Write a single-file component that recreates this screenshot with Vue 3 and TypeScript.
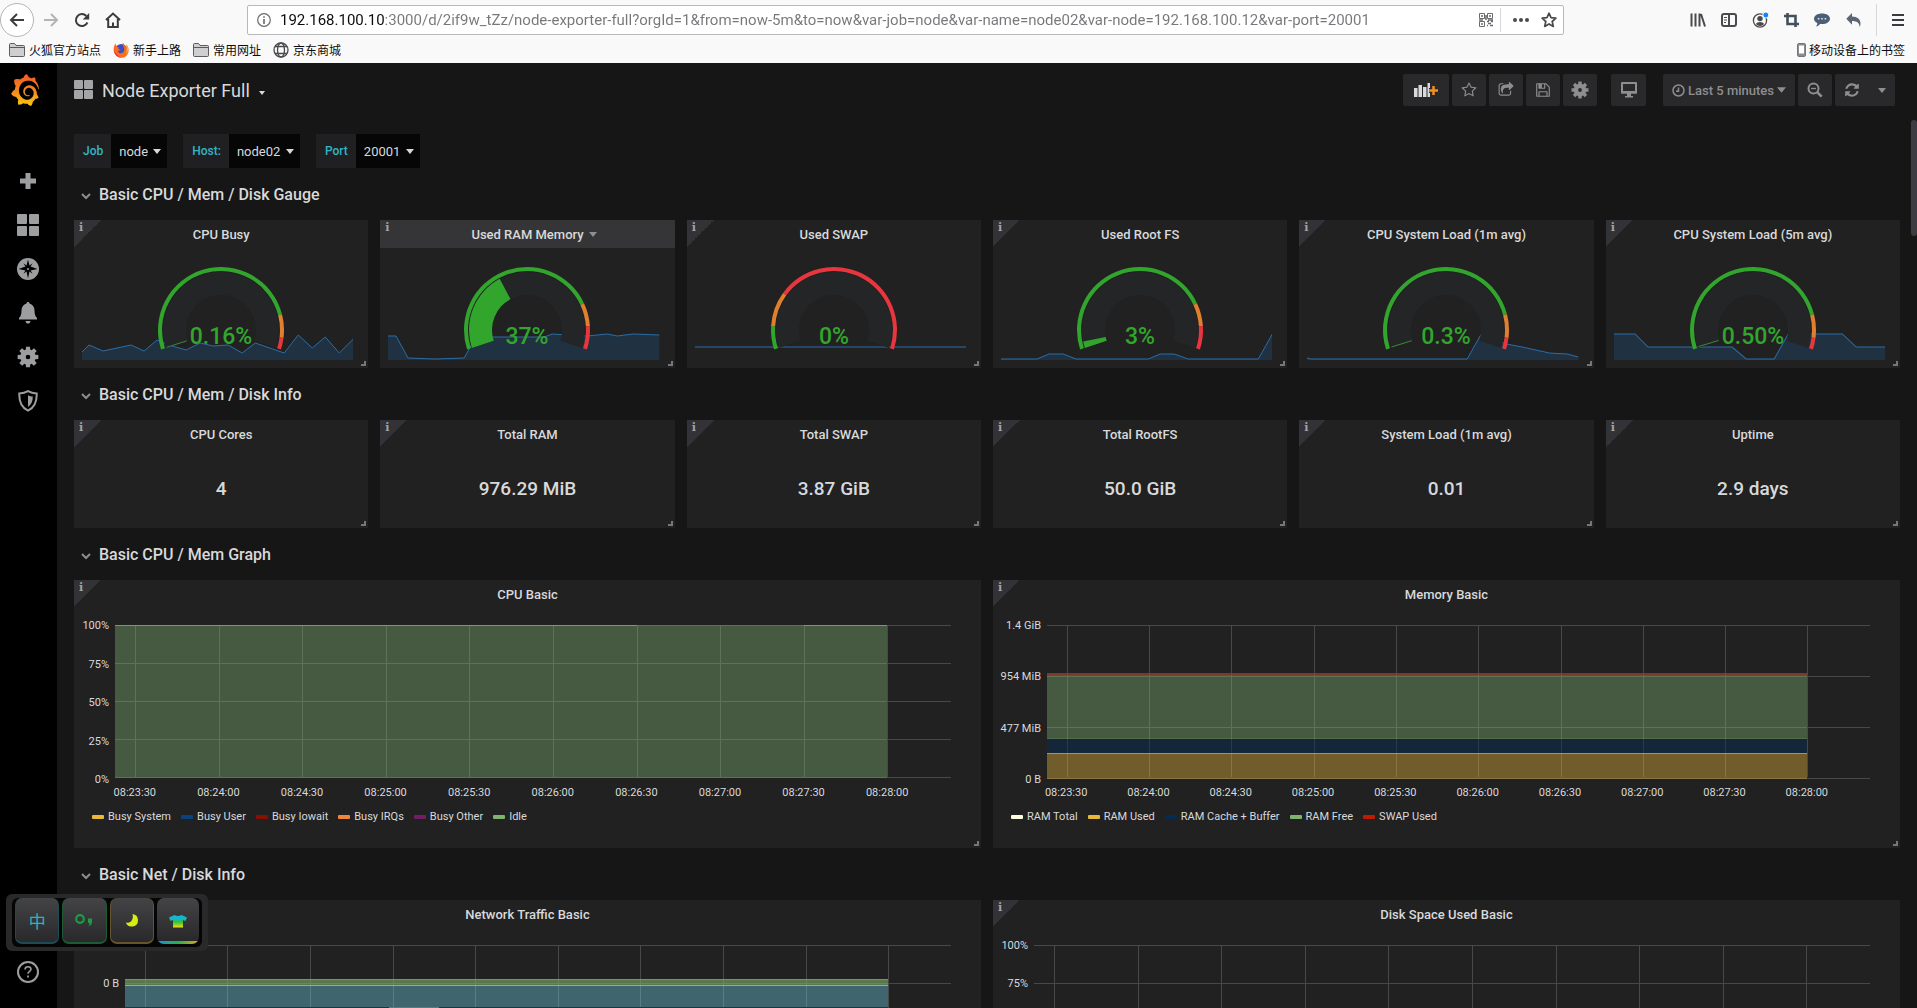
<script setup lang="ts">
interface Stop { to: number; color: string }
interface Gauge { title: string; value: string; fill: number; stops: Stop[]; spark: string; area: boolean; active?: boolean }
interface Area { x?: string; y: number; h: number; w: string; color: string; opacity: number }
interface Legend { name: string; color: string }
interface Chart { title: string; kind: string; info: boolean; folded?: boolean; yLabels: string[]; rows: number[]; areas: Area[]; legend: Legend[] }

const GREEN = '#32a52d'
const ORANGE = '#e0802f'
const RED = '#e8363f'

const usage: Stop[] = [{ to: 0.8, color: GREEN }, { to: 0.9, color: ORANGE }, { to: 1, color: RED }]
const load: Stop[] = [{ to: 0.85, color: GREEN }, { to: 0.95, color: ORANGE }, { to: 1, color: RED }]
const swap: Stop[] = [{ to: 0.1, color: GREEN }, { to: 0.25, color: ORANGE }, { to: 1, color: RED }]

const gauges: Gauge[] = [
  { title: 'CPU Busy', value: '0.16%', fill: 0.0016, stops: load, area: true, spark: '0,32 7,25 21,31 49,25 62,31 75,20 90,26 104,30 118,23 131,26 146,25 160,33 173,23 202,33 216,15 230,28 243,17 257,33 271,19' },
  { title: 'Used RAM Memory', value: '37%', fill: 0.37, stops: usage, area: true, active: true, spark: '0,16 8,16 20,38 47,39 76,38 88,17 156,17 164,14 199,16 219,14 229,16 245,14 271,15' },
  { title: 'Used SWAP', value: '0%', fill: 0, stops: swap, area: false, spark: '0,27 271,27' },
  { title: 'Used Root FS', value: '3%', fill: 0.03, stops: usage, area: true, spark: '0,39 36,39 48,34 62,34 75,39 147,39 159,34 173,34 187,39 257,39 271,14' },
  { title: 'CPU System Load (1m avg)', value: '0.3%', fill: 0.003, stops: load, area: true, spark: '0,38 4,39 160,39 174,14 199,24 215,27 242,33 260,34 271,37' },
  { title: 'CPU System Load (5m avg)', value: '0.50%', fill: 0.005, stops: load, area: true, spark: '0,14 21,14 34,27 118,27 132,39 160,39 174,14 228,14 242,27 271,27' },
]

const stats = [
  { title: 'CPU Cores', value: '4' },
  { title: 'Total RAM', value: '976.29 MiB' },
  { title: 'Total SWAP', value: '3.87 GiB' },
  { title: 'Total RootFS', value: '50.0 GiB' },
  { title: 'System Load (1m avg)', value: '0.01' },
  { title: 'Uptime', value: '2.9 days' },
]

const times = ['08:23:30', '08:24:00', '08:24:30', '08:25:00', '08:25:30', '08:26:00', '08:26:30', '08:27:00', '08:27:30', '08:28:00']
const tickX = times.map((_, i) => `${2.4 + i * 10}%`)

const graphs: Chart[] = [
  {
    title: 'CPU Basic', kind: 'percent', info: true,
    yLabels: ['100%', '75%', '50%', '25%', '0%'], rows: [1, 39, 77, 115, 153],
    areas: [
      { y: 0, h: 153, w: '92.4%', color: '#7eb26d', opacity: 0.4 },
      { y: 0, h: 1, w: '62.4%', color: '#7eb26d', opacity: 0.7 },
      { x: '82.4%', y: 0, h: 1, w: '10%', color: '#7eb26d', opacity: 0.7 },
      { y: 152, h: 1, w: '92.4%', color: '#a0524d', opacity: 0.9 },
    ],
    legend: [
      { name: 'Busy System', color: '#eab839' }, { name: 'Busy User', color: '#0a437c' }, { name: 'Busy Iowait', color: '#890f02' },
      { name: 'Busy IRQs', color: '#ef843c' }, { name: 'Busy Other', color: '#6d1f62' }, { name: 'Idle', color: '#7eb26d' },
    ],
  },
  {
    title: 'Memory Basic', kind: 'bytes', info: true,
    yLabels: ['1.4 GiB', '954 MiB', '477 MiB', '0 B'], rows: [1, 52, 103, 154],
    areas: [
      { y: 50, h: 64, w: '92.4%', color: '#7eb26d', opacity: 0.4 },
      { y: 114, h: 14, w: '92.4%', color: '#052b51', opacity: 0.5 },
      { y: 128, h: 26, w: '92.4%', color: '#eab839', opacity: 0.4 },
      { y: 128, h: 1, w: '92.4%', color: '#eab839', opacity: 0.6 },
      { y: 113, h: 1, w: '92.4%', color: '#7eb26d', opacity: 0.2 },
      { y: 48, h: 2, w: '92.4%', color: '#94402c', opacity: 0.8 },
    ],
    legend: [
      { name: 'RAM Total', color: '#fffce0' }, { name: 'RAM Used', color: '#eab839' }, { name: 'RAM Cache + Buffer', color: '#052b51' },
      { name: 'RAM Free', color: '#7eb26d' }, { name: 'SWAP Used', color: '#bf1b00' },
    ],
  },
]

const lowerGraphs: Chart[] = [
  {
    title: 'Network Traffic Basic', kind: 'net', info: false, folded: true,
    yLabels: ['', '0 B'], rows: [1, 39, 77, 115, 153],
    areas: [
      { y: 41, h: 112, w: '92.4%', color: '#6ed0e0', opacity: 0.4 },
      { y: 34, h: 7, w: '92.4%', color: '#7eb26d', opacity: 0.6 },
      { y: 34, h: 1, w: '92.4%', color: '#7eb26d', opacity: 0.6 },
      { y: 40, h: 1, w: '92.4%', color: '#9ad488', opacity: 0.7 },
      { y: 62, h: 2, w: '92.4%', color: '#17384c', opacity: 1 },
      { x: '20%', y: 63, h: 1, w: '6%', color: '#6c8a84', opacity: 1 },
      { x: '32%', y: 62, h: 2, w: '6%', color: '#a8623c', opacity: 1 },
    ],
    legend: [],
  },
  {
    title: 'Disk Space Used Basic', kind: 'percent', info: true, folded: true,
    yLabels: ['100%', '75%'], rows: [1, 39, 77, 115, 153], areas: [], legend: [],
  },
]

// Gauge dials sweep 216 degrees, from -198 to +18, around (64, 64).
const C = 64
function point(r: number, v: number): string {
  const a = ((v * 216 - 198) * Math.PI) / 180
  return `${(C + r * Math.cos(a)).toFixed(2)} ${(C + r * Math.sin(a)).toFixed(2)}`
}
function band(r0: number, r1: number, from: number, to: number): string {
  const big = (to - from) * 216 > 180 ? 1 : 0
  return `M${point(r1, from)}A${r1} ${r1} 0 ${big} 1 ${point(r1, to)}L${point(r0, to)}A${r0} ${r0} 0 ${big} 0 ${point(r0, from)}Z`
}
function dialStops(stops: Stop[]) {
  return stops.map((s, i) => ({ color: s.color, d: band(59, 63, i ? stops[i - 1].to : 0, s.to) }))
}
function gearPath(c: number, ro: number, ri: number): string {
  const pts: string[] = []
  for (let i = 0; i < 8; i++) {
    for (const [off, r] of [[-0.29, ri], [-0.19, ro], [0.19, ro], [0.29, ri]]) {
      const a = (i * Math.PI) / 4 + off
      pts.push(`${(c + r * Math.cos(a)).toFixed(2)} ${(c + r * Math.sin(a)).toFixed(2)}`)
    }
  }
  const h = ro * 0.22
  return `M${pts.join('L')}ZM${c - h} ${c}a${h} ${h} 0 1 0 ${2 * h} 0a${h} ${h} 0 1 0 ${-2 * h} 0Z`
}
const gear = gearPath(12, 11.5, 8.4)

const starPath = 'M1201 1004l306-297-422-62-189-382-189 382-422 62 306 297-73 421 378-199 377 199zm527-357q0 22-26 48l-363 354 86 500q1 7 1 20 0 50-41 50-19 0-40-12l-449-236-449 236q-22 12-40 12-21 0-31.5-14.5t-10.5-35.5q0-6 2-20l86-500-364-354q-25-27-25-48 0-37 56-46l502-73 225-455q19-41 49-41t49 41l225 455 502 73q56 9 56 46z'
const sharePath = 'M1472 989v259q0 119-84.5 203.5t-203.5 84.5h-832q-119 0-203.5-84.5t-84.5-203.5v-832q0-119 84.5-203.5t203.5-84.5h255q13 0 22.5 9.5t9.5 22.5q0 27-26 32-77 26-133 60-10 4-16 4h-112q-66 0-113 47t-47 113v832q0 66 47 113t113 47h832q66 0 113-47t47-113v-214q0-19 18-29 28-13 54-37 16-16 35-8 21 9 21 29zm237-496l-384 384q-18 19-45 19-12 0-25-5-39-17-39-59v-192h-160q-323 0-438 131-119 137-74 473 3 23-20 34-8 2-12 2-16 0-26-13-10-14-21-31t-39.5-68.5-49.5-99.5-38.5-114-17.5-122q0-49 3.5-91t14-90 28-88 47-81.5 68.5-74 94.5-61.5 124.5-48.5 159.5-30.5 196.5-11h160v-192q0-42 39-59 13-5 25-5 26 0 45 19l384 384q19 19 19 45t-19 45z'
const savePath = 'M512 1536h768v-384h-768v384zm896 0h128v-896q0-14-10-38.5t-20-34.5l-281-281q-10-10-34-20t-39-10v416q0 40-28 68t-68 28h-576q-40 0-68-28t-28-68v-416h-128v1280h128v-416q0-40 28-68t68-28h832q40 0 68 28t28 68v416zm-384-928v-320q0-13-9.5-22.5t-22.5-9.5h-192q-13 0-22.5 9.5t-9.5 22.5v320q0 13 9.5 22.5t22.5 9.5h192q13 0 22.5-9.5t9.5-22.5zm640 32v928q0 40-28 68t-68 28h-1344q-40 0-68-28t-28-68v-1344q0-40 28-68t68-28h928q40 0 88 20t76 48l280 280q28 28 48 76t20 88z'
const refreshPath = 'M1639 1056q0 5-1 7-64 268-268 434.5t-478 166.5q-146 0-282.5-55t-243.5-157l-129 129q-19 19-45 19t-45-19-19-45v-448q0-26 19-45t45-19h448q26 0 45 19t19 45-19 45l-137 137q71 66 161 102t187 36q134 0 250-65t186-179q11-17 53-117 8-23 30-23h192q13 0 22.5 9.5t9.5 22.5zm25-800v448q0 26-19 45t-45 19h-448q-26 0-45-19t-19-45 19-45l138-138q-148-137-349-137-134 0-250 65t-186 179q-11 17-53 117-8 23-30 23h-199q-13 0-22.5-9.5t-9.5-22.5v-7q65-268 270-434.5t480-166.5q146 0 284 55.5t245 156.5l130-129q19-19 45-19t45 19 19 45z'
const logoPath = 'M23.02 10.59a8.578 8.578 0 0 0-.862-3.034 8.911 8.911 0 0 0-1.789-2.445c.337-1.342-.413-2.505-.413-2.505-1.292-.08-2.113.4-2.416.62-.052-.02-.102-.044-.154-.064-.22-.089-.446-.172-.677-.247-.231-.073-.47-.14-.711-.197a9.867 9.867 0 0 0-.875-.161C14.557.753 12.94 0 12.94 0c-1.804 1.145-2.147 2.744-2.147 2.744l-.018.093c-.098.029-.2.057-.298.088-.138.042-.275.094-.413.143-.138.055-.275.107-.41.166a8.869 8.869 0 0 0-1.557.87l-.063-.029c-2.497-.955-4.716.195-4.716.195-.203 2.658.996 4.33 1.235 4.636a11.608 11.608 0 0 0-.607 2.635C1.636 12.677.953 15.014.953 15.014c1.926 2.214 4.171 2.351 4.171 2.351.003-.002.006-.002.006-.005.285.509.615.994.986 1.446.156.19.32.371.488.548-.704 2.009.099 3.68.099 3.68 2.144.08 3.553-.937 3.849-1.173a9.784 9.784 0 0 0 3.164.501h.08l.055-.003.107-.002.103-.005.003.002c1.01 1.44 2.788 1.646 2.788 1.646 1.264-1.332 1.337-2.653 1.337-2.94v-.058c0-.02-.003-.039-.003-.06.265-.187.52-.387.758-.6a7.875 7.875 0 0 0 1.415-1.7c1.43.083 2.437-.885 2.437-.885-.236-1.49-1.085-2.216-1.264-2.354l-.018-.013-.016-.013a.217.217 0 0 1-.031-.02c.008-.092.016-.18.02-.27.011-.162.016-.323.016-.48v-.253l-.005-.098-.008-.135a1.891 1.891 0 0 0-.01-.13c-.003-.042-.008-.083-.013-.125l-.016-.124-.018-.122a6.215 6.215 0 0 0-2.032-3.73 6.015 6.015 0 0 0-3.222-1.46 6.292 6.292 0 0 0-.85-.048l-.107.002h-.063l-.044.003-.104.008a4.777 4.777 0 0 0-3.335 1.695c-.332.4-.592.84-.768 1.297a4.594 4.594 0 0 0-.312 1.817l.003.091c.005.055.007.11.013.164a3.615 3.615 0 0 0 .698 1.82 3.53 3.53 0 0 0 1.827 1.282c.33.098.66.14.971.137.039 0 .078 0 .114-.002l.063-.003c.02 0 .041-.003.062-.003.034-.002.065-.007.099-.01.007 0 .018-.003.028-.003l.031-.005.06-.008a1.18 1.18 0 0 0 .112-.02c.036-.008.072-.013.109-.024a2.634 2.634 0 0 0 .914-.415c.028-.02.056-.041.085-.065a.248.248 0 0 0 .039-.35.244.244 0 0 0-.309-.06l-.078.042c-.09.044-.184.083-.283.116a2.476 2.476 0 0 1-.475.096c-.028.003-.054.006-.083.006l-.083.002c-.026 0-.054 0-.08-.002l-.102-.006h-.012l-.024.006c-.016-.003-.031-.003-.044-.006-.031-.002-.06-.007-.091-.01a2.59 2.59 0 0 1-.724-.213 2.557 2.557 0 0 1-.667-.438 2.52 2.52 0 0 1-.805-1.475 2.306 2.306 0 0 1-.029-.444l.006-.122v-.023l.002-.031c.003-.021.003-.04.005-.06a3.163 3.163 0 0 1 1.352-2.29 3.12 3.12 0 0 1 .937-.43 2.946 2.946 0 0 1 .776-.101h.06l.07.002.045.003h.026l.07.005a4.041 4.041 0 0 1 1.635.49 3.94 3.94 0 0 1 1.602 1.662 3.77 3.77 0 0 1 .397 1.414l.005.076.003.075c.002.026.002.05.002.075 0 .024.003.052 0 .07v.065l-.002.073-.008.174a6.195 6.195 0 0 1-.08.639 5.1 5.1 0 0 1-.267.927 5.31 5.31 0 0 1-.624 1.13 5.052 5.052 0 0 1-3.237 2.014 4.82 4.82 0 0 1-.649.066l-.039.003h-.287a6.607 6.607 0 0 1-1.716-.265 6.776 6.776 0 0 1-3.4-2.274 6.75 6.75 0 0 1-.746-1.15 6.616 6.616 0 0 1-.714-2.596l-.005-.083-.002-.02v-.056l-.003-.073v-.096l-.003-.104v-.07l.003-.163c.008-.22.026-.45.054-.678a8.707 8.707 0 0 1 .28-1.355c.128-.444.286-.872.473-1.277a7.04 7.04 0 0 1 1.456-2.1 5.925 5.925 0 0 1 .953-.763c.169-.111.343-.213.524-.306.089-.05.182-.091.273-.135.047-.02.093-.042.138-.062a7.177 7.177 0 0 1 .714-.267l.145-.045c.049-.015.098-.026.148-.041.098-.029.197-.052.296-.076.049-.013.1-.02.15-.033l.15-.032.151-.028.076-.013.075-.01.153-.024c.057-.01.114-.013.171-.023l.169-.021c.036-.003.073-.008.106-.01l.073-.008.036-.003.042-.002c.057-.003.114-.008.171-.01l.086-.006h.023l.037-.003.145-.007a7.999 7.999 0 0 1 1.708.125 7.917 7.917 0 0 1 2.048.68 8.253 8.253 0 0 1 1.672 1.09l.09.077.089.078c.06.052.114.107.171.159.057.052.112.106.166.16.052.055.107.107.159.164a8.671 8.671 0 0 1 1.41 1.978c.012.026.028.052.04.078l.04.078.075.156c.023.051.05.1.07.153l.065.15a8.848 8.848 0 0 1 .45 1.34.19.19 0 0 0 .201.142.186.186 0 0 0 .172-.184c.01-.246.002-.532-.024-.856z'

const variables = [
  { id: 'job', label: 'Job', value: 'node' },
  { id: 'host', label: 'Host:', value: 'node02' },
  { id: 'port', label: 'Port', value: '20001' },
]
const url = '192.168.100.10:3000/d/2if9w_tZz/node-exporter-full?orgId=1&from=now-5m&to=now&var-job=node&var-name=node02&var-node=192.168.100.12&var-port=20001'
</script>

<template>
  <div class="window">
    <header class="browser">
      <div class="toolbar">
        <div class="nav-buttons">
          <button class="back" aria-label="Back"><svg width="16" height="16" viewBox="0 0 16 16" fill="none" stroke="#3c3c40" stroke-width="2"><path d="M15 8H2M8 2L2 8l6 6" /></svg></button>
          <button aria-label="Forward"><svg width="16" height="16" viewBox="0 0 16 16" fill="none" stroke="#b4b4b6" stroke-width="2"><path d="M1 8h13M8 2l6 6-6 6" /></svg></button>
          <button aria-label="Reload"><svg width="16" height="16" viewBox="0 0 16 16"><path d="M13.4 10.5A6 6 0 1 1 12.3 4" fill="none" stroke="#3c3c40" stroke-width="2" /><path d="M15.2 1v6.5H8.7z" fill="#3c3c40" /></svg></button>
          <button aria-label="Home"><svg width="16" height="16" viewBox="0 0 16 16" fill="none" stroke="#3c3c40" stroke-width="2"><path d="M1 8l7-6.5L15 8M3.2 7v8h9.6V7" /><path d="M8 15v-4.5" /></svg></button>
        </div>
        <div class="address">
          <svg width="14" height="14" viewBox="0 0 14 14" fill="none" stroke="#6a6a6e"><circle cx="7" cy="7" r="6.3" stroke-width="1.2" /><path d="M7 6v5M7 3.2v1.6" stroke-width="1.6" /></svg>
          <input type="text" class="url" aria-label="Address" :value="url" />
          <svg width="14" height="14" viewBox="0 0 14 14" fill="none" stroke="#6c6c70"><path d="M.5.5h5v5h-5zM8.5.5h5v5h-5zM.5 8.5h5v5h-5z" /><path d="M2 3h2M10 3h2M2 11h2M8 8.5h2M12 8.5h2M9 10.5h3M8 12.5h1M11 12.5h3M7 2v5M0 7h4M9 7h5" stroke-width="1.6" /></svg>
          <span class="bar-split"></span>
          <button aria-label="Page actions"><svg width="16" height="4" viewBox="0 0 16 4" fill="#4a4a4e"><circle cx="2" cy="2" r="2" /><circle cx="8" cy="2" r="2" /><circle cx="14" cy="2" r="2" /></svg></button>
          <button aria-label="Bookmark this page"><svg width="16" height="16" viewBox="0 0 16 16" fill="none" stroke="#4a4a4e" stroke-width="1.7" stroke-linejoin="round"><path d="M8 1.2l2 4.5 4.9.5-3.7 3.3 1.1 4.9L8 11.9l-4.3 2.5 1.1-4.9L1.1 6.2 6 5.7z" /></svg></button>
        </div>
        <div class="tools">
          <button aria-label="Library"><svg width="16" height="16" viewBox="0 0 16 16" stroke="#4a4a4e" stroke-width="2"><path d="M1.5 1.5v13M5.5 1.5v13M9.5 1.5v13M11 2l4 12.5" /></svg></button>
          <button aria-label="Sidebars"><svg width="16" height="14" viewBox="0 0 16 14" fill="none" stroke="#4a4a4e" stroke-width="2"><rect x="1" y="1" width="14" height="12" rx="2" /><path d="M8 1v12" /><path d="M3 4.5h3M3 7h3M3 9.5h2" stroke-width="1" /></svg></button>
          <button aria-label="Account"><svg width="17" height="16" viewBox="0 0 17 16"><circle cx="8" cy="8.5" r="6.6" fill="none" stroke="#4a4a4e" stroke-width="1.3" /><circle cx="8" cy="6.6" r="2.7" fill="#4a4a4e" /><path d="M3.8 12q1.2-2 4.2-2t4.2 2q-1.7 2-4.2 2t-4.2-2z" fill="#4a4a4e" /><circle cx="13.8" cy="3" r="3" fill="#0a84ff" stroke="#f9f9fa" /></svg></button>
          <button aria-label="Screenshot"><svg width="15" height="16" viewBox="0 0 15 16" fill="none" stroke="#44505e" stroke-width="2.6"><path d="M3.5 1v11H15M0 4h11.5v11" /></svg></button>
          <button aria-label="Chat"><svg width="18" height="16" viewBox="0 0 18 16"><path d="M9 1.5c4.7 0 8 2.2 8 5.3 0 3-3.3 5.300-8 5.300-.7 0-1.300 0-2-.2-1 1.600-2.600 2.400-4 2.500 1-1 1.400-2.200 1.300-3.300C2.300 10.200 1 8.600 1 6.800c0-3.100 3.300-5.300 8-5.300z" fill="#4b6076" /><path d="M4.800 6.800h1.600M8.200 6.800h1.600M11.600 6.800h1.600" stroke="#dce4ec" stroke-width="1.5" /></svg></button>
          <button aria-label="Undo"><svg width="15" height="14" viewBox="0 0 15 14"><path d="M6 0v3.500c5.500 0 8.500 3 8.500 7 0 1.400-.3 2.500-.9 3.500 0-4-2.600-6-7.600-6v3.700L.3 5.800z" fill="#5a6674" /></svg></button>
          <span class="tool-split"></span>
          <button aria-label="Menu"><svg width="12" height="12" viewBox="0 0 12 12" stroke="#3c3c40" stroke-width="2"><path d="M0 1h12M0 6h12M0 11h12" /></svg></button>
        </div>
      </div>
      <nav class="bookmarks">
        <a href="#"><svg width="16" height="14" viewBox="0 0 16 14"><path d="M.5 12.5V1.500q0-1 1-1h4l1.500 2h7.500q1 0 1 1v9q0 1-1 1H1.500q-1 0-1-1z" fill="#cfcfd1" stroke="#5c5c60" /><path d="M.5 4.5h15" stroke="#5c5c60" /></svg>火狐官方站点</a>
        <a href="#"><svg width="16" height="16" viewBox="0 0 16 16"><circle cx="8.3" cy="8" r="6" fill="#3a4fc4" /><path d="M2.500 1.500C.6 4 .2 7.300 1 10c1 3.500 4 5.700 7.300 5.700 4.200 0 7.300-3.200 7.300-7.300 0-2.500-.8-4.500-2.300-5.800.6 1.800.5 3.300.1 4.200C12.500 3.500 10.800 2.300 9.800.3 9.200 3.400 11.500 5 11.300 8c-.1 2-1.700 3.200-3.400 3.200-1.900 0-3.200-1.300-3.200-2.800 1 .6 2.200.5 3-.3C6 8 5.300 6.900 5.600 5.500 4 5 3 3.500 2.500 1.500z" fill="#ff6a1c" /><path d="M13.300 2.600c2.600 3.400 2 7.400-.4 9.800 1.300-3.200.8-6.200.4-9.800z" fill="#ffc62e" /><path d="M1 7c0 5 3.500 8.700 7.300 8.700C4 14 1.600 11 1 7z" fill="#e4173f" /></svg>新手上路</a>
        <a href="#"><svg width="16" height="14" viewBox="0 0 16 14"><path d="M.5 12.5V1.500q0-1 1-1h4l1.500 2h7.500q1 0 1 1v9q0 1-1 1H1.500q-1 0-1-1z" fill="#cfcfd1" stroke="#5c5c60" /><path d="M.5 4.5h15" stroke="#5c5c60" /></svg>常用网址</a>
        <a href="#"><svg width="16" height="16" viewBox="0 0 16 16" fill="none" stroke="#4a4a4e" stroke-width="1.3"><circle cx="8" cy="8" r="7" /><ellipse cx="8" cy="8" rx="3.5" ry="7" /><path d="M2 4.500h12M2 11.500h12" /></svg>京东商城</a>
        <a href="#" class="mobile"><svg width="9" height="14" viewBox="0 0 9 14"><rect x=".5" y=".5" width="8" height="13" rx="1.5" fill="#8c8c90" stroke="#77777b" /><rect x="2" y="2.5" width="5" height="8" fill="#fff" /></svg>移动设备上的书签</a>
      </nav>
    </header>

    <div class="app">
      <nav class="sidebar">
        <a href="#" class="logo" aria-label="Grafana">
          <svg width="30" height="32" viewBox="0 0 24 24" preserveAspectRatio="none">
            <defs><linearGradient id="logo-fill" x1="0" y1="0" x2="0" y2="1"><stop offset="0" stop-color="#f05a28" /><stop offset=".55" stop-color="#f48a22" /><stop offset="1" stop-color="#fbca0a" /></linearGradient></defs>
            <path :d="logoPath" fill="url(#logo-fill)" />
          </svg>
        </a>
        <a href="#" aria-label="Create"><svg width="18" height="18" viewBox="0 0 18 18" stroke="#9c9ea0" stroke-width="5"><path d="M9 1v16M1 9h16" /></svg></a>
        <a href="#" aria-label="Dashboards"><svg width="22" height="22" viewBox="0 0 22 22" fill="#9c9ea0"><rect width="10" height="10" rx="1" /><rect x="12" width="10" height="10" rx="1" /><rect y="12" width="10" height="10" rx="1" /><rect x="12" y="12" width="10" height="10" rx="1" /></svg></a>
        <a href="#" aria-label="Explore"><svg width="22" height="22" viewBox="0 0 22 22"><circle cx="11" cy="11" r="11" fill="#9c9ea0" /><path d="M11 1.500l1.500 6 3.200-2.200-2.200 3.200 7 2.500-7 1.500 2.200 3.200-3.200-2.200L11 20.500l-1.500-7-3.200 2.200 2.200-3.200-7-1.500 7-2.500-2.200-3.200 3.200 2.200z" fill="#000" /><circle cx="11" cy="11" r="1" fill="#9c9ea0" /></svg></a>
        <a href="#" aria-label="Alerting"><svg width="20" height="22" viewBox="0 0 20 22" fill="#9c9ea0"><path d="M10 0c1 0 1.500.7 1.500 1.500C14.500 2.300 16.500 5 16.500 8.500c0 4 1 6 2.500 7.500v1.500H1V16c1.500-1.500 2.500-3.500 2.500-7.500 0-3.500 2-6.200 5-7C8.500.7 9 0 10 0zM7.500 19h5c-.3 1.800-1.200 2.600-2.500 2.600S7.800 20.800 7.500 19z" /></svg></a>
        <a href="#" aria-label="Configuration"><svg width="22" height="22" viewBox="0 0 24 24"><path :d="gear" fill="#9c9ea0" fill-rule="evenodd" /></svg></a>
        <a href="#" aria-label="Server Admin"><svg width="20" height="22" viewBox="0 0 20 22"><path d="M10 1.200c2.500 1.500 5.300 2.200 8.700 2.300.3 8-2 14-8.700 17.200C3.300 17.500 1 11.500 1.300 3.500 4.700 3.400 7.500 2.700 10 1.200z" fill="none" stroke="#9c9ea0" stroke-width="2" /><path d="M10 5.200c1.400.8 3 1.200 4.800 1.400-.1 5-1.500 8.300-4.800 10.400z" fill="#9c9ea0" /></svg></a>
        <a href="#" class="help" aria-label="Help"><svg width="22" height="22" viewBox="0 0 22 22" fill="none" stroke="#9c9ea0"><circle cx="11" cy="11" r="10" stroke-width="2" /><path d="M8 8.500Q8.200 5.800 11 5.800t3 2.500c0 2-3 2.300-3 4.500" stroke-width="1.6" /><path d="M11 14.500v2" stroke-width="1.8" /></svg></a>
      </nav>

      <main class="dashboard">
        <div class="navbar">
          <svg width="20" height="20" viewBox="0 0 20 20" fill="#a4a5a7"><rect width="9" height="9" rx="1" /><rect x="10" width="9" height="9" rx="1" /><rect y="10" width="9" height="9" rx="1" /><rect x="10" y="10" width="9" height="9" rx="1" /></svg>
          <button class="title">Node Exporter Full <svg width="6" height="4" viewBox="0 0 6 4" fill="#d8d9da"><path d="M0 0h6L3 4z" /></svg></button>
          <div class="actions">
            <button class="add" aria-label="Add panel">
              <svg width="24" height="16" viewBox="0 0 24 16"><path d="M0 6h3.500v9H0zM4.500 3H8v12H4.500zM9 5h3.500v10H9zM13.500 1H16v14h-2.500z" fill="#d8d9da" /><path d="M19.500 4v9M15 8.500h9" stroke="#29292b" stroke-width="5" /><path d="M19.500 4v9M15 8.500h9" stroke="#f58f1f" stroke-width="2.5" /></svg>
            </button>
            <button aria-label="Mark as favorite"><svg width="16" height="16" viewBox="0 0 1792 1792" fill="#8e8e90"><path :d="starPath" /></svg></button>
            <button aria-label="Share dashboard"><svg width="16" height="16" viewBox="0 0 1792 1792" fill="#8e8e90"><path :d="sharePath" /></svg></button>
            <button aria-label="Save dashboard"><svg width="16" height="16" viewBox="0 0 1792 1792" fill="#8e8e90"><path :d="savePath" /></svg></button>
            <button aria-label="Dashboard settings"><svg width="18" height="18" viewBox="0 0 24 24"><path :d="gear" fill="#8e8e90" fill-rule="evenodd" /></svg></button>
            <button class="tv" aria-label="Cycle view mode"><svg width="18" height="16" viewBox="0 0 18 16"><path d="M2 1h14v9.500H2z" fill="none" stroke="#8e8e90" stroke-width="2" stroke-linejoin="round" /><path d="M1 9h16v2.500H1zM7 11h4v3h2v1.500H5V14h2z" fill="#8e8e90" /></svg></button>
            <button class="range"><svg width="13" height="13" viewBox="0 0 13 13" fill="none" stroke="#8e8e90" stroke-width="1.5"><circle cx="6.5" cy="6.5" r="5.5" /><path d="M6.500 3.500v3.700H4" /></svg>Last 5 minutes<svg class="caret" width="9" height="6" viewBox="0 0 8 5" fill="#8e8e90"><path d="M0 0h8L4 5z" /></svg></button>
            <button aria-label="Zoom out"><svg width="16" height="16" viewBox="0 0 16 16" fill="none" stroke="#8e8e90"><circle cx="6.5" cy="6.5" r="5" stroke-width="2" /><path d="M10.200 10.200l4.500 4.500" stroke-width="2.6" /><path d="M4 6.500h5" stroke-width="1.4" /></svg></button>
            <button class="refresh" aria-label="Refresh"><svg width="16" height="16" viewBox="0 0 1792 1792" fill="#8e8e90"><path :d="refreshPath" /></svg><svg width="8" height="5" viewBox="0 0 8 5" fill="#8e8e90"><path d="M0 0h8L4 5z" /></svg></button>
          </div>
        </div>

        <div class="variables">
          <div v-for="v in variables" :key="v.id" class="variable">
            <label :for="v.id">{{ v.label }}</label>
            <div class="pick">
              <select :id="v.id"><option>{{ v.value }}</option></select>
              <svg width="8" height="5" viewBox="0 0 8 5" fill="#d8d9da"><path d="M0 0h8L4 5z" /></svg>
            </div>
          </div>
        </div>

        <h2 class="row-title"><svg width="10" height="7" viewBox="0 0 10 7"><path d="M1 1l4 4 4-4" /></svg>Basic CPU / Mem / Disk Gauge</h2>
        <div class="grid six">
          <section v-for="g in gauges" :key="g.title" class="panel gauge">
            <span class="corner" :class="{ flat: g.active }"><i>i</i></span>
            <h3 :class="{ active: g.active }">{{ g.title }}<svg v-if="g.active" width="8" height="5" viewBox="0 0 8 5" fill="#8e8e90"><path d="M0 0h8L4 5z" /></svg></h3>
            <div class="dial-box">
              <svg class="spark" viewBox="0 0 271 40" preserveAspectRatio="none">
                <polygon v-if="g.area" :points="`0,40 ${g.spark} 271,40`" />
                <polyline :points="g.spark" />
              </svg>
              <svg class="dial" width="128" height="90" viewBox="0 0 128 90">
                <path :d="band(35, 58, 0, 1)" fill="#242526" />
                <path v-if="g.fill > 0.01" :d="band(35, 58, 0, g.fill)" :fill="GREEN" />
                <path v-else-if="g.fill > 0" :d="`M${point(36, g.fill)}L${point(57, g.fill)}`" stroke="#378a3c" />
                <path v-for="s in dialStops(g.stops)" :key="s.d" :d="s.d" :fill="s.color" />
                <text x="64" y="78" text-anchor="middle">{{ g.value }}</text>
              </svg>
            </div>
            <span class="grip"></span>
          </section>
        </div>

        <h2 class="row-title"><svg width="10" height="7" viewBox="0 0 10 7"><path d="M1 1l4 4 4-4" /></svg>Basic CPU / Mem / Disk Info</h2>
        <div class="grid six">
          <section v-for="s in stats" :key="s.title" class="panel stat">
            <span class="corner"><i>i</i></span>
            <h3>{{ s.title }}</h3>
            <p>{{ s.value }}</p>
            <span class="grip"></span>
          </section>
        </div>

        <template v-for="(group, gi) in [graphs, lowerGraphs]" :key="gi">
          <h2 class="row-title"><svg width="10" height="7" viewBox="0 0 10 7"><path d="M1 1l4 4 4-4" /></svg>{{ gi ? 'Basic Net / Disk Info' : 'Basic CPU / Mem Graph' }}</h2>
          <div class="grid two">
            <section v-for="c in group" :key="c.title" class="panel graph" :class="[c.kind, { folded: c.folded }]">
              <span v-if="c.info" class="corner"><i>i</i></span>
              <h3>{{ c.title }}</h3>
              <div class="chart">
                <div class="y-axis"><span v-for="(l, i) in c.yLabels" :key="i">{{ l }}</span></div>
                <svg class="plot" height="154" width="100%" shape-rendering="crispEdges">
                  <rect v-for="y in c.rows" :key="'r' + y" x="0" :y="y - 1" width="100%" height="1" fill="#484849" />
                  <rect v-for="x in tickX" :key="x" :x="x" y="0" width="1" height="152" fill="#484849" />
                  <rect v-for="(a, i) in c.areas" :key="'a' + i" :x="a.x || 0" :y="a.y" :width="a.w" :height="a.h" :fill="a.color" :fill-opacity="a.opacity" />
                </svg>
                <div v-if="!c.folded" class="x-axis"><span v-for="t in times" :key="t">{{ t }}</span></div>
              </div>
              <ul v-if="!c.folded" class="legend">
                <li v-for="l in c.legend" :key="l.name"><i :style="{ background: l.color }"></i>{{ l.name }}</li>
              </ul>
              <span class="grip"></span>
            </section>
          </div>
        </template>
      </main>
      <span class="scroll-thumb"></span>
    </div>

    <div class="ime">
      <div class="keys">
        <button class="key cyan">中</button>
        <button class="key green" aria-label="Punctuation"><svg width="18" height="14" viewBox="0 0 18 14"><circle cx="5" cy="6" r="3.8" fill="none" stroke="#1f9a46" stroke-width="2.2" /><path d="M13 5.500h4V9q0 3-3.500 4 1.200-1.500 1-3H13z" fill="#1f9a46" /></svg></button>
        <button class="key gold" aria-label="Night mode"><svg width="14" height="14" viewBox="0 0 14 14"><path d="M7.500 1a6.300 6.300 0 1 1-6.700 8.500C5.500 11 9 6.500 7.500 1z" fill="#d6ee12" /></svg></button>
        <button class="key rainbow" aria-label="Skins"><svg width="18" height="14" viewBox="0 0 18 14"><defs><linearGradient id="shirt" x1="0" y1="0" x2="0" y2="1"><stop offset=".25" stop-color="#14b4d8" /><stop offset=".55" stop-color="#2fc23a" /><stop offset="1" stop-color="#f5dc14" /></linearGradient></defs><path d="M5.500 1q3.500 2 7 0L18 3.500 16.500 7 14 6v7.500H4V6L1.500 7 0 3.500z" fill="url(#shirt)" /></svg></button>
      </div>
    </div>
  </div>
</template>

<style>
body { margin: 0; background: #161617; overflow: hidden; }
</style>

<style scoped>
* { box-sizing: border-box; }
button { border: 0; padding: 0; background: none; font-family: inherit; color: inherit; display: flex; align-items: center; justify-content: center; }
a { color: inherit; text-decoration: none; }
svg { display: block; flex: none; }
h2, h3, p, ul { margin: 0; padding: 0; }
.window { height: 100vh; display: flex; flex-direction: column; overflow: hidden; font-family: Roboto, "Liberation Sans", sans-serif; color: #d8d9da; }

.browser { flex: none; height: 63px; background: #f9f9fa; color: #0c0c0d; }
.toolbar { height: 39px; display: flex; align-items: center; }
.nav-buttons { width: 247px; display: flex; align-items: center; gap: 15px; flex: none; }
.back { width: 34px; height: 34px; border: 1px solid #b5b5b7; border-radius: 50%; background: #fff; margin-right: -6px; }
.address { flex: 1; height: 30px; display: flex; align-items: center; border: 1px solid #b9b9bb; border-radius: 2px; background: #fff; padding: 0 6px 0 9px; }
.url { flex: 1; min-width: 0; height: 26px; border: 0; outline: 0; padding: 0; margin-left: 9px; font: 15px Roboto, "Noto Sans", sans-serif; color: transparent; background: linear-gradient(90deg, #0c0c0d 0 105px, #77777b 105px); background-clip: text; -webkit-background-clip: text; }
.bar-split { width: 1px; height: 24px; background: #d7d7db; margin: 0 12px 0 7px; }
.address button + button { margin-left: 12px; }
.tools { flex: none; width: 353px; padding: 0 13px 0 126px; display: flex; align-items: center; justify-content: space-between; }
.tool-split { width: 1px; height: 32px; background: #d7d7db; }
.bookmarks { height: 22px; display: flex; align-items: center; gap: 12px; padding: 0 12px 0 9px; font: 12px "Noto Sans CJK SC", sans-serif; line-height: 18px; }
.bookmarks a { display: flex; align-items: center; gap: 4px; }
.bookmarks .mobile { margin-left: auto; gap: 3px; }

.app { flex: 1; min-height: 0; display: flex; background: #161617; position: relative; }
.sidebar { flex: none; width: 57px; background: #000; display: flex; flex-direction: column; padding-bottom: 14px; }
.sidebar a { width: 56px; height: 44px; display: flex; align-items: center; justify-content: center; }
.sidebar .logo { height: 54px; margin-bottom: 42px; padding-right: 6px; }
.sidebar .help { margin-top: auto; }
.dashboard { flex: 1; min-width: 0; padding: 0 17px; overflow: hidden; }
.scroll-thumb { position: absolute; right: 0; top: 57px; width: 6px; height: 116px; border-radius: 3px; background: #3c3c42; }

.navbar { height: 54px; display: flex; align-items: center; gap: 8px; padding-right: 5px; }
.title { font-size: 18px; gap: 9px; }
.title svg { margin-top: 6px; }
.actions { margin-left: auto; display: flex; gap: 3px; }
.actions button { width: 34px; height: 32px; background: #29292b; border-radius: 2px; }
.actions .add { width: 46px; }
.actions .tv { width: 35px; margin: 0 14px 0 11px; }
.actions .range { width: 132px; font-size: 13px; font-weight: 500; color: #8e8e90; gap: 3px; }
.actions .refresh { width: 60px; gap: 18px; }

.variables { display: flex; gap: 16px; height: 51px; padding-top: 17px; }
.variable { display: flex; height: 34px; }
.variable label { display: flex; align-items: center; padding: 0 8px 0 9px; font-size: 12px; font-weight: 500; color: #33b5c4; background: #202023; }
.pick { position: relative; display: flex; }
.pick select { appearance: none; border: 0; border-radius: 0; background: #060607; color: #d8d9da; font: 13px Roboto, sans-serif; padding: 0 19px 0 8px; }
.pick svg { position: absolute; right: 6px; top: 15px; pointer-events: none; }

.row-title { height: 52px; display: flex; align-items: center; gap: 8px; padding-left: 7px; font-size: 16px; font-weight: 500; }
.row-title svg { margin-top: 4px; fill: none; stroke: #8e8e90; stroke-width: 2; }
.grid { display: grid; gap: 12px; }
.six { grid-template-columns: repeat(6, 1fr); }
.two { grid-template-columns: repeat(2, 1fr); }
.panel { position: relative; background: #212122; min-width: 0; overflow: hidden; }
.panel h3 { height: 28px; display: flex; align-items: center; justify-content: center; gap: 5px; font-size: 13px; font-weight: 500; }
.panel h3.active { background: #353537; }
.panel h3 svg { margin-right: -13px; }
.corner { position: absolute; left: 0; top: 0; width: 27px; height: 27px; background: linear-gradient(135deg, #333337 50%, transparent 50%); }
.corner.flat { background: none; }
.corner i { position: absolute; left: 5px; top: 2px; font: bold 11px/12px "DejaVu Serif", serif; color: #a3a3a6; }
.grip { position: absolute; right: 2px; bottom: 2px; width: 5px; height: 5px; border: solid #77777a; border-width: 0 2px 2px 0; }

.gauge { height: 148px; }
.dial-box { height: 120px; display: grid; padding: 18px 0 8px; }
.spark { grid-area: 1 / 1; align-self: end; margin-left: 8px; width: calc(100% - 23px); height: 40px; }
.spark polygon { fill: #1f76bd; fill-opacity: 0.2; }
.spark polyline { fill: none; stroke: #2a6da6; stroke-width: 1; vector-effect: non-scaling-stroke; }
.dial { grid-area: 1 / 1; justify-self: center; }
.dial text { font-size: 23px; font-weight: 500; fill: #32a52d; }

.stat { height: 108px; }
.stat p { height: 80px; display: flex; align-items: center; justify-content: center; font-size: 19px; font-weight: 500; }

.graph { height: 268px; }
.chart { display: grid; grid-template-columns: 35px 1fr; column-gap: 6px; padding: 17px 30px 0 0; font-size: 11px; }
.bytes .chart { grid-template-columns: 48px 1fr; }
.net .chart { grid-template-columns: 45px 1fr; }
.y-axis { height: 168px; margin: -7px 0; display: flex; flex-direction: column; justify-content: space-between; text-align: right; line-height: 15px; white-space: nowrap; }
.folded .y-axis { height: 52px; }
.y-axis span { height: 14px; }
.x-axis { grid-column: 2; display: flex; margin: 6px 22px 0 -22px; line-height: 16px; }
.x-axis span { flex: none; width: 10%; text-align: center; }
.legend { list-style: none; display: flex; gap: 10px; padding: 8px 0 0 18px; font-size: 11px; line-height: 16px; }
.legend li { display: flex; align-items: center; gap: 4px; white-space: nowrap; }
.legend i { width: 12px; height: 4px; border-radius: 1px; }

.ime { position: fixed; left: 6px; bottom: 57px; width: 202px; padding: 4px 6px; background: #29292a; border-radius: 6px; }
.keys { display: flex; gap: 3px; padding: 0 3px; background: #050505; border-radius: 6px; }
.key { flex: 1; height: 46px; margin: 0 0 3px; border-radius: 7px; background: linear-gradient(#444446, #29292b); border: solid #1d4c56; border-width: 0 1px 2px; }
.key.cyan { font: 17px "Noto Sans CJK SC", sans-serif; color: #22b8bc; }
.key.green { border-color: #1c5b35; }
.key.gold { border-color: #65552a; }
.key.rainbow { border: 0; background: linear-gradient(#444446, #29292b) 0 0 / 100% 43px no-repeat, linear-gradient(90deg, #1f8fe0, #27b04a 50%, #e0a91e); }
</style>
